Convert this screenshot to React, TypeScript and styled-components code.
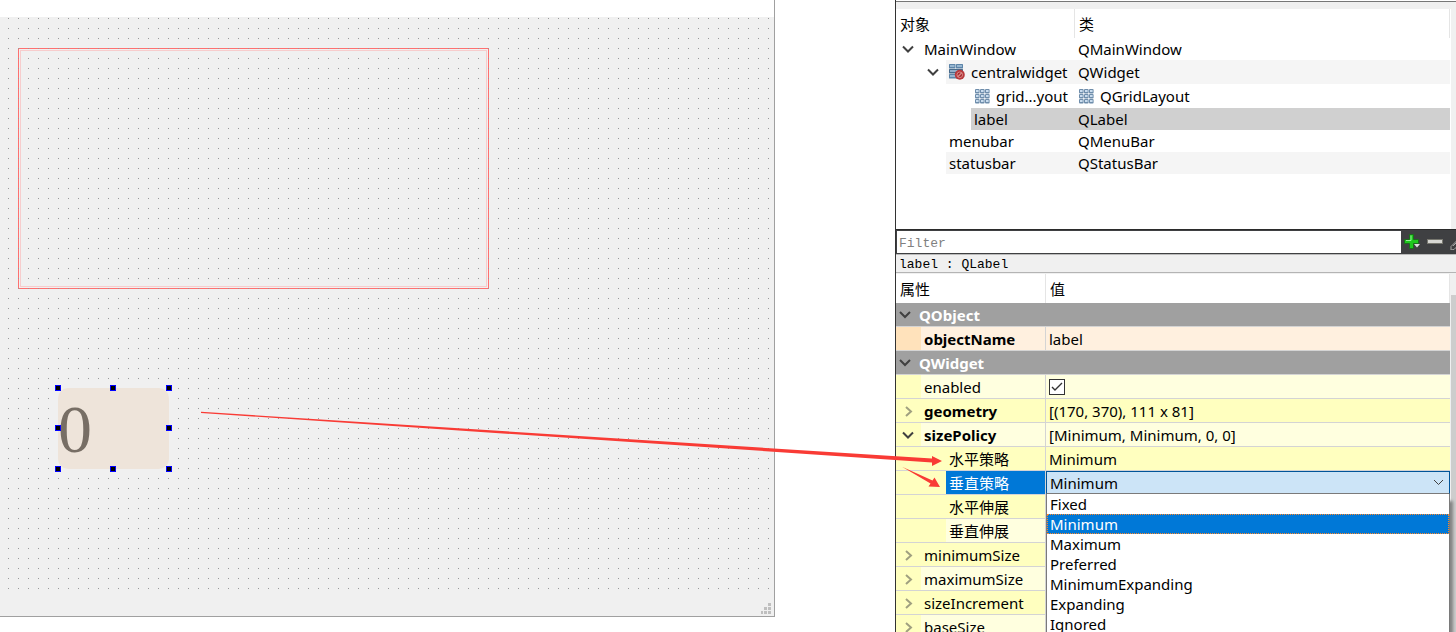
import React from "react";
import styled, { createGlobalStyle, css } from "styled-components";

const ui = `"Noto Sans", "Noto Sans CJK SC", sans-serif`;
const mono = `"Liberation Mono", "Noto Sans CJK SC", monospace`;

const GlobalStyle = createGlobalStyle`
  *, *::before, *::after { box-sizing: border-box; }
  body { margin: 0; background: #fff; color: #000; font: 15px/20px ${ui}; }
  table { border-collapse: separate; border-spacing: 0; table-layout: fixed; width: 100%; }
  td, th { padding: 0; text-align: left; font-weight: 400; }
  button { border: 0; padding: 0; background: none; color: inherit; display: block; flex: none; }
`;

const Page = styled.main`
  position: relative;
  display: grid;
  grid-template-columns: minmax(0, 1fr) 561px;
  column-gap: 120px;
  height: 100vh;
  overflow: hidden;
`;

const FormWindow = styled.section`
  display: flex;
  margin: 0 0 15px;
  padding-top: 17px;
  border-right: 1px solid #a0a0a0;
  border-bottom: 1px solid #a0a0a0;
`;

const FormCanvas = styled.div`
  position: relative;
  flex: 1;
  background: #f0f0f0;
  overflow: hidden;
`;

const DotGrid = styled.div`
  position: absolute;
  inset: 1px 0 26px 8px;
  background: conic-gradient(from 270deg at 1px 1px, #999 90deg, transparent 0) 0 0 / 10px 10px;
`;

const LayoutFrame = styled.div`
  position: absolute;
  left: 18px;
  top: 31px;
  width: 471px;
  height: 241px;
  border: 1px solid #ff7070;
  padding: 1px;
  &::before { content: ""; display: block; height: 100%; border: 1px solid #f7cccc; }
`;

const Tile = styled.div`
  position: absolute;
  left: 58px;
  top: 371px;
  width: 111px;
  height: 81px;
  border-radius: 10px;
  background: #eee4da;
  color: #776e65;
  font: 68px/82px "Liberation Serif", serif;
`;

const Handle = styled.i<{ $x: number; $y: number }>`
  position: absolute;
  left: ${(p) => p.$x}px;
  top: ${(p) => p.$y}px;
  width: 6px;
  height: 6px;
  margin: -3px;
  border: 1px solid #00f;
  background: #000;
`;

const SizeGrip = styled.svg`
  position: absolute;
  right: 3px;
  bottom: 2px;
`;

const Side = styled.aside`
  display: flex;
  flex-direction: column;
  min-height: 0;
  border-left: 1px solid #333;
  background: #f0f0f0;
  overflow: hidden;
`;

const TopEdge = styled.div`
  flex: none;
  height: 9px;
  border-top: 1px solid #fff;
  box-shadow: inset 0 1px #777;
`;

const Inspector = styled.div`
  flex: none;
  height: 220px;
  margin-right: 5px;
  border-right: 1px solid #fff;
  background: #fff;
`;

const HeadCell = styled.th<{ $h: number }>`
  && { padding-left: 4px; }
  height: ${(p) => p.$h}px;
  border-right: 1px solid #e5e5e5;
`;

const TreeRow = styled.tr<{ $h: number; $bg: string }>`
  height: ${(p) => p.$h}px;
  td:last-child { background: ${(p) => p.$bg}; padding-left: 3px; }
`;

const TreeName = styled.div<{ $h: number; $bg: string; $indent: number }>`
  display: flex;
  align-items: center;
  height: ${(p) => p.$h}px;
  margin-left: ${(p) => p.$indent}px;
  white-space: nowrap;
  > span {
    flex: 1;
    height: 100%;
    padding-left: 3px;
    background: ${(p) => p.$bg};
  }
`;

const Twisty = styled.button`
  width: 25px;
  height: 16px;
  text-align: left;
  svg { display: block; }
`;

const IconText = styled.span`
  display: flex;
  align-items: center;
  gap: 6px;
`;

const FilterBar = styled.div`
  flex: none;
  display: flex;
  align-items: flex-start;
  height: 25px;
  padding: 1px 0 0 1px;
  background: #3f4042;
  border-top: 1px solid #2b2b2b;
  overflow: hidden;
`;

const FilterInput = styled.input`
  flex: 1;
  min-width: 0;
  height: 22px;
  border: 0;
  padding: 3px 2px 1px;
  outline: 0;
  background: #fff;
  font: 13px/18px ${mono};
  &::placeholder { color: #808080; opacity: 1; }
`;

const Tools = styled.div`
  display: flex;
  flex: none;
  width: 55px;
  gap: 7px;
  padding: 3px 0 0 3px;
  overflow: hidden;
`;

const ObjectLine = styled.div`
  flex: none;
  height: 19px;
  padding-left: 3px;
  border-top: 1px solid #bbb;
  border-bottom: 1px solid #b4b4b4;
  font: 13px/20px ${mono};
`;

const Properties = styled.div`
  position: relative;
  display: flex;
  flex: 1;
  min-height: 0;
  padding-top: 1px;
`;

const PropTableWrap = styled.div`
  flex: 1;
  min-width: 0;
  background: #fff;
  border-right: 1px solid #f0f0f0;
`;

const Scrollbar = styled.div`
  width: 5px;
  background: linear-gradient(#f0f0f0 21px, #cdcdcd 21px);
`;

const line = css`border-bottom: 1px solid #d4d4d4;`;

const GroupCell = styled.td`
  ${line}
  height: 24px;
  background: #a0a0a0;
  color: #fff;
  font-weight: 700;
  > div { display: flex; align-items: center; }
  button { width: 23px; }
`;

const NameCell = styled.td<{ $bg: string }>`
  ${line}
  height: 24px;
  background: ${(p) => p.$bg};
  border-right: 1px solid #d4d4d4;
`;

const PropName = styled.div<{ $gutter: string; $depth: number; $bold?: boolean; $active?: boolean }>`
  display: flex;
  height: 23px;
  font-weight: ${(p) => (p.$bold ? 700 : 400)};
  line-height: 24px;
  > span:first-child { flex: none; width: ${(p) => p.$depth * 25}px; background: ${(p) => p.$gutter}; display: flex; align-items: center; }
  > span:last-child { flex: 1; padding-left: 3px; ${(p) => p.$active && "background: #0078d7; color: #fff;"} }
`;

const ValueCell = styled.td<{ $bg: string }>`
  ${line}
  height: 24px;
  && { padding-left: 3px; }
  background: ${(p) => p.$bg};
`;

const Check = styled.input`
  appearance: none;
  display: block;
  width: 16px;
  height: 16px;
  margin: 0;
  border: 1px solid #333;
  background: #fff url("data:image/svg+xml,%3Csvg xmlns='http://www.w3.org/2000/svg' width='14' height='14'%3E%3Cpath d='M2 7l3 3 7-7' fill='none' stroke='%23333' stroke-width='1.4'/%3E%3C/svg%3E");
`;

const Popup = styled.div`
  position: absolute;
  left: 150px;
  right: 6px;
  top: 198px;
`;

const ComboBox = styled.div`
  position: relative;
  height: 23px;
  select {
    appearance: none;
    display: block;
    width: 100%;
    height: 23px;
    padding: 0 3px;
    border: 1px solid #005499;
    border-bottom-color: #7a7a7a;
    border-radius: 0;
    outline: 0;
    background: #cce4f7;
    color: #000;
    font: 15px/20px ${ui};
  }
  svg { position: absolute; right: 6px; top: 6px; pointer-events: none; }
`;

const OptionList = styled.ul`
  margin: 0;
  padding: 0 0 20px;
  list-style: none;
  border: 1px solid #7a7a7a;
  border-top: 0;
  background: #fff;
  box-shadow: 4px 6px 3px -1px #808080;
`;

const Option = styled.li<{ $on: boolean }>`
  height: 20px;
  padding-left: 2px;
  line-height: 18px;
  border: 1px ${(p) => (p.$on ? "dotted #ff8728" : "solid transparent")};
  background: ${(p) => (p.$on ? "#0078d7" : "#fff")};
  color: ${(p) => (p.$on ? "#fff" : "#000")};
`;

const Arrows = styled.svg`
  position: absolute;
  left: 0;
  top: 0;
  pointer-events: none;
`;

const Chevron = ({ kind }: { kind: "group" | "open" | "closed" }) => (
  <svg width="22" height="16" viewBox="0 0 22 16" fill="none" strokeWidth="2" stroke={kind === "closed" ? "#a0a080" : "#404040"}>
    <path d={{ group: "M4 5l5 5 5-5", open: "M7 5.500l5 5 5-5", closed: "M10 4l5 4.500-5 4.500" }[kind]} />
  </svg>
);

const GridIcon = () => (
  <svg width="16" height="16" viewBox="0 0 16 16">
    {[1, 6, 11].map((y) => [1, 6, 11].map((x) => (
      <g key={`${x}-${y}`}>
        <rect x={x} y={y} width="4.600" height="4.600" rx="1" fill="#6e8dab" />
        <rect x={x + 1} y={y + 1} width="2.600" height="2" fill="#c9dcee" />
      </g>
    )))}
  </svg>
);

const BrokenLayoutIcon = () => (
  <svg width="16" height="16" viewBox="0 0 16 16">
    <rect x="0" y="0" width="6.500" height="4.500" rx=".5" fill="#5c84a8" />
    <rect x="7" y="0" width="7" height="4.500" rx=".5" fill="#5c84a8" />
    <rect x="0" y="5" width="14" height="4.500" rx=".5" fill="#486b8c" />
    <rect x="0" y="10" width="8" height="4.500" rx=".5" fill="#5c84a8" />
    <path d="M1 2h4.500M8 2h5M1 7h12M1 12h6" stroke="#a9c6de" strokeWidth="1.500" />
    <circle cx="10.800" cy="10.800" r="5" fill="#b8393c" />
    <circle cx="10.800" cy="10.800" r="2.800" fill="#a52a2e" stroke="#d98886" />
    <path d="M8.800 12.800l4-4" stroke="#d98886" strokeWidth="1.400" />
  </svg>
);

const tree = [
  { name: "MainWindow", cls: "QMainWindow", h: 22, indent: 0, bg: "#fff", open: true },
  { name: "centralwidget", cls: "QWidget", h: 24, indent: 25, bg: "#f5f5f5", open: true, icon: "broken" },
  { name: "grid...yout", cls: "QGridLayout", h: 24, indent: 75, bg: "#fff", icon: "grid" },
  { name: "label", cls: "QLabel", h: 22, indent: 75, bg: "#d0d0d0" },
  { name: "menubar", cls: "QMenuBar", h: 22, indent: 50, bg: "#fff" },
  { name: "statusbar", cls: "QStatusBar", h: 22, indent: 50, bg: "#f5f5f5" },
];

const Y1 = "#ffffbf";
const Y2 = "#ffffdf";

type Prop = { name: string; value?: React.ReactNode; bold?: boolean; depth?: number; open?: boolean; active?: boolean; bg: string; gutter?: string };

const widgetProps: Prop[] = [
  { name: "enabled", value: <Check type="checkbox" defaultChecked aria-label="enabled" />, bg: Y2 },
  { name: "geometry", value: "[(170, 370), 111 x 81]", bold: true, open: false, bg: Y1 },
  { name: "sizePolicy", value: "[Minimum, Minimum, 0, 0]", bold: true, open: true, bg: Y2 },
  { name: "水平策略", value: "Minimum", depth: 2, bg: Y1 },
  { name: "垂直策略", depth: 2, active: true, bg: Y2 },
  { name: "水平伸展", depth: 2, bg: Y1 },
  { name: "垂直伸展", depth: 2, bg: Y2 },
  { name: "minimumSize", open: false, bg: Y1 },
  { name: "maximumSize", open: false, bg: Y2 },
  { name: "sizeIncrement", open: false, bg: Y1 },
  { name: "baseSize", open: false, bg: Y2 },
];

const policies = ["Fixed", "Minimum", "Maximum", "Preferred", "MinimumExpanding", "Expanding", "Ignored"];

const PropRow = ({ p }: { p: Prop }) => (
  <tr>
    <NameCell $bg={p.bg}>
      <PropName $gutter={p.gutter ?? Y1} $depth={p.depth ?? 1} $bold={p.bold} $active={p.active}>
        <span>
          {p.open !== undefined && (
            <Twisty aria-label={`Toggle ${p.name}`}><Chevron kind={p.open ? "open" : "closed"} /></Twisty>
          )}
        </span>
        <span>{p.name}</span>
      </PropName>
    </NameCell>
    <ValueCell $bg={p.bg}>{p.value}</ValueCell>
  </tr>
);

const GroupRow = ({ name }: { name: string }) => (
  <tr>
    <GroupCell colSpan={2}>
      <div><Twisty aria-label={`Toggle ${name}`}><Chevron kind="group" /></Twisty>{name}</div>
    </GroupCell>
  </tr>
);

export default function App() {
  return (
    <>
      <GlobalStyle />
      <Page>
        <FormWindow>
          <FormCanvas>
            <LayoutFrame />
            <DotGrid />
            <Tile>
              0
              {[[0, 0], [55, 0], [111, 0], [0, 40], [111, 40], [0, 81], [55, 81], [111, 81]].map(([x, y]) => (
                <Handle key={`${x}-${y}`} $x={x} $y={y} />
              ))}
            </Tile>
            <SizeGrip width="11" height="11" fill="#bfbfbf">
              <path d="M8 0h3v3h-3zM4 4h3v3h-3zM8 4h3v3h-3zM1 8h2v3h-2zM4 8h3v3h-3zM8 8h3v3h-3z" />
            </SizeGrip>
          </FormCanvas>
        </FormWindow>

        <Side>
          <TopEdge />
          <Inspector>
            <table>
              <colgroup><col width="179" /><col /></colgroup>
              <thead><tr><HeadCell $h={29}>对象</HeadCell><HeadCell $h={29}>类</HeadCell></tr></thead>
              <tbody>
                {tree.map((n) => (
                  <TreeRow key={n.name} $h={n.h} $bg={n.bg}>
                    <td>
                      <TreeName $h={n.h} $bg={n.bg} $indent={n.indent}>
                        {n.open && <Twisty aria-label={`Toggle ${n.name}`}><Chevron kind="open" /></Twisty>}
                        <IconText>
                          {n.icon === "broken" && <BrokenLayoutIcon />}
                          {n.icon === "grid" && <GridIcon />}
                          {n.name}
                        </IconText>
                      </TreeName>
                    </td>
                    <td><IconText>{n.icon === "grid" && <GridIcon />}{n.cls}</IconText></td>
                  </TreeRow>
                ))}
              </tbody>
            </table>
          </Inspector>
          <FilterBar>
            <FilterInput placeholder="Filter" aria-label="Filter" />
            <Tools>
              <button aria-label="Add">
                <svg width="16" height="16" viewBox="0 0 16 16">
                  <path d="M5.500.5h4v5h5v4h-5v5h-4v-5h-5v-4h5z" fill="#1ec81e" stroke="#1b6e1b" />
                  <path d="M7 1.500v5h-5" fill="none" stroke="#9af09a" /><path d="M10 10h6l-3 3.500z" fill="#e0e0e0" />
                </svg>
              </button>
              <button aria-label="Remove">
                <svg width="16" height="16"><rect x=".5" y="5.500" width="15" height="4" fill="#d8d8d4" stroke="#77776f" /></svg>
              </button>
              <button aria-label="Configure">
                <svg width="16" height="16" fill="none" stroke="#a8a8a8"><path d="M1 12.500l8-8 3 3-8 8-3 .5zM3 12l6-6" /></svg>
              </button>
            </Tools>
          </FilterBar>
          <ObjectLine>label : QLabel</ObjectLine>
          <Properties>
            <PropTableWrap>
              <table>
                <colgroup><col width="150" /><col /></colgroup>
                <thead><tr><HeadCell $h={29}>属性</HeadCell><HeadCell $h={29}>值</HeadCell></tr></thead>
                <tbody>
                  <GroupRow name="QObject" />
                  <PropRow p={{ name: "objectName", value: "label", bold: true, bg: "#fff0df", gutter: "#ffe2bb" }} />
                  <GroupRow name="QWidget" />
                  {widgetProps.map((p) => <PropRow key={p.name} p={p} />)}
                </tbody>
              </table>
            </PropTableWrap>
            <Scrollbar />
            <Popup>
              <ComboBox>
                <select aria-label="垂直策略" defaultValue="Minimum">
                  {policies.map((o) => <option key={o}>{o}</option>)}
                </select>
                <svg width="11" height="11" fill="none" stroke="#404040"><path d="M1 3l4.500 4.500L10 3" /></svg>
              </ComboBox>
              <OptionList role="listbox">
                {policies.map((o) => (
                  <Option key={o} role="option" aria-selected={o === "Minimum"} $on={o === "Minimum"}>{o}</Option>
                ))}
              </OptionList>
            </Popup>
          </Properties>
        </Side>

        <Arrows width="960" height="500" fill="#f93b35">
          <path d="M201 411.800L932 458.500L932 456L942 461L932 466L932 462.500L201 413z" />
          <path d="M902 466.800L932.500 480.500L934.500 477.500L940 487L928.500 486.500L930.500 483.500z" />
        </Arrows>
      </Page>
    </>
  );
}
